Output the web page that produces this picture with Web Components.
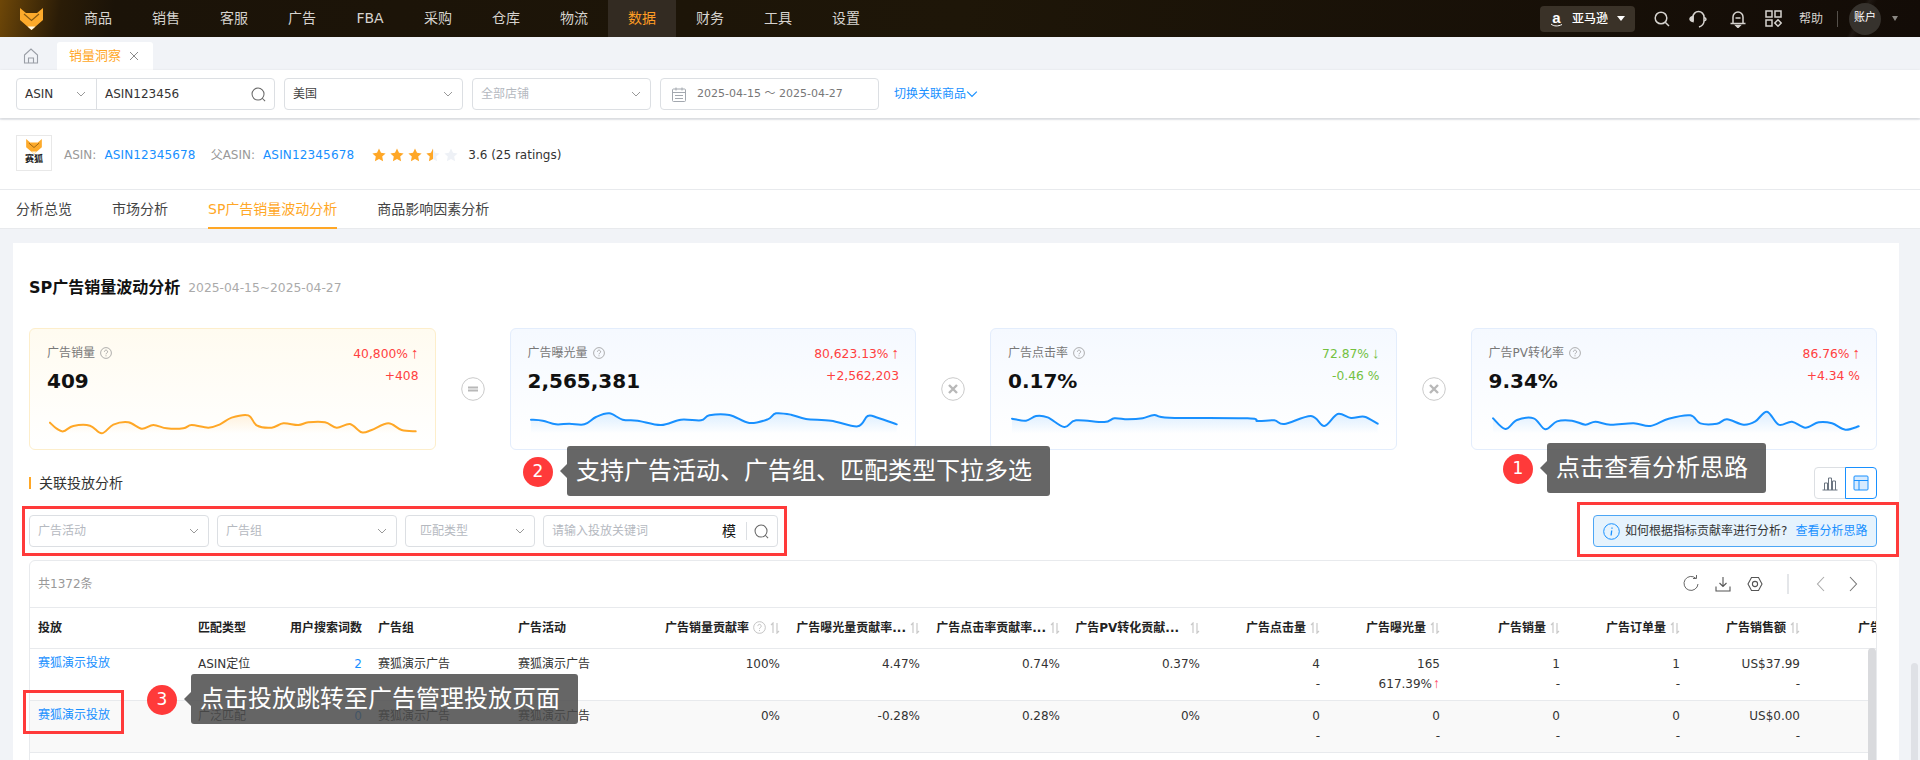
<!DOCTYPE html>
<html lang="zh">
<head>
<meta charset="utf-8">
<title>销量洞察</title>
<style>
  html, body { margin: 0; height: 760px; overflow: hidden; background: #f1f3f7; }
  body { font: 12px/1.5 "DejaVu Sans", "Noto Sans CJK SC", sans-serif; color: #333; }
  sx-app { display: block; position: relative; height: 760px; overflow: hidden; }
</style>
</head>
<body>
<sx-app>
  <sx-topbar></sx-topbar>
  <sx-tabstrip></sx-tabstrip>
  <sx-filterbar></sx-filterbar>
  <sx-product></sx-product>
  <sx-subtabs></sx-subtabs>
  <sx-panel>
    <sx-metric slot="metrics" label="广告销量" value="409" pct="40,800%" dir="up" delta="+408" tone="warm"
      points="150,308 170,326 190,334 220,318 270,317 305,340 340,314 385,307 425,326 460,315 500,325 550,325 575,315 625,323 660,313 695,293 745,286 770,316 815,323 850,310 895,315 925,307 975,307 1010,323 1050,312 1085,337 1115,330 1165,310 1205,330 1247,334"></sx-metric>
    <sx-operator slot="metrics" kind="eq"></sx-operator>
    <sx-metric slot="metrics" label="广告曝光量" value="2,565,381" pct="80,623.13%" dir="up" delta="+2,562,203"
      points="150,299 185,302 225,313 265,311 310,313 345,291 385,280 425,299 470,302 540,315 600,299 660,301 685,286 745,285 805,309 860,298 885,280 930,284 975,297 1050,302 1130,319 1160,288 1190,293 1247,313"></sx-metric>
    <sx-operator slot="metrics" kind="x"></sx-operator>
    <sx-metric slot="metrics" label="广告点击率" value="0.17%" pct="72.87%" dir="down" delta="-0.46 %"
      points="153,296 195,302 225,288 260,292 310,321 345,301 430,306 460,295 500,298 545,295 580,285 625,293 860,295 890,303 940,301 970,312 1050,288 1090,318 1130,282 1170,294 1210,290 1250,311"></sx-metric>
    <sx-operator slot="metrics" kind="x"></sx-operator>
    <sx-metric slot="metrics" label="广告PV转化率" value="9.34%" pct="86.76%" dir="up" delta="+4.34 %"
      points="153,295 190,327 225,300 275,295 310,328 345,304 390,302 430,314 460,305 505,314 575,310 625,318 680,296 745,286 775,310 825,311 855,298 905,314 940,304 975,275 1010,314 1050,305 1090,323 1130,307 1170,310 1210,329 1250,319"></sx-metric>
    <sx-data-table slot="table"></sx-data-table>
  </sx-panel>

  <!-- guide overlays lie over the page -->
  <sx-redbox style="left:22px;top:506px;width:765px;height:50px"></sx-redbox>
  <sx-redbox style="left:1577px;top:502px;width:322px;height:55px"></sx-redbox>
  <sx-redbox style="left:23px;top:690px;width:101px;height:44px"></sx-redbox>
  <sx-callout n="1" style="left:1503px;top:443px">点击查看分析思路</sx-callout>
  <sx-callout n="2" style="left:523px;top:446px">支持广告活动、广告组、匹配类型下拉多选</sx-callout>
  <sx-callout n="3" style="left:147px;top:674px">点击投放跳转至广告管理投放页面</sx-callout>
  <sx-page-scroll></sx-page-scroll>
</sx-app>

<script>
const chevron = (c = "#999", s = 10) =>
  `<svg width="${s}" height="${s}" viewBox="0 0 10 10" fill="none" stroke="${c}" stroke-width="1"><path d="M1 3l4 4 4-4"/></svg>`;
const lens = (c = "#666", s = 15) =>
  `<svg width="${s}" height="${s}" viewBox="0 0 16 16" fill="none" stroke="${c}" stroke-width="1.1"><circle cx="7.5" cy="7.5" r="6.4"/><path d="M12 12l3 3"/></svg>`;
const fox = (w, h) =>
  `<svg width="${w}" height="${h}" viewBox="0 0 23 22"><path d="M0 0l6 5h11l6-5v12L11.500 22 0 12z" fill="#fdaa2b"/><path d="M4 6l7.500 6.500L19 6" fill="none" stroke="#8a5a10" stroke-width="1.200"/><path d="M7.500 18.500h8L11.500 22z" fill="#fff6e0"/></svg>`;
const helpDot = (c = "#999") =>
  `<svg width="12" height="12" viewBox="0 0 12 12" fill="none" stroke="${c}" stroke-width=".8"><circle cx="6" cy="6" r="5.400"/><path d="M4.400 4.700a1.600 1.600 0 1 1 2.400 1.400c-.6.3-.8.600-.8 1.200M6 8.300v1"/></svg>`;
const sortIcon =
  `<svg width="10" height="12" viewBox="0 0 10 12" fill="none" stroke="#c9c9c9" stroke-width="1.2"><path d="M3 11V1L1 3M7 1v10l2-2"/></svg>`;

class SxTopbar extends HTMLElement {
  constructor() {
    super();
    this.attachShadow({ mode: "open" });
  }
  connectedCallback() {
    const items = ["商品", "销售", "客服", "广告", "FBA", "采购", "仓库", "物流", "数据", "财务", "工具", "设置"];
    this.shadowRoot.innerHTML = `
      <style>
        :host {
          display: flex;
          height: 37px;
          align-items: center;
          color: #d6d3cf;
          font-size: 14px;
          background:
            linear-gradient(118deg, transparent 96.2%, rgba(255,255,255,.05) 96.4%, transparent 96.800%),
            linear-gradient(100deg, #6e4708 0, #2a1c07 3.2%, #1b1308 6%, #1e1608 50%, #130c07 100%);
        }
        .logo { width: 23px; height: 22px; margin: 0 21px 0 20px; display: flex; }
        nav { display: flex; height: 37px; }
        nav a { width: 68px; display: flex; align-items: center; justify-content: center; }
        nav a.on { background: #332b22; color: #ff9d24; }
        .right { margin-left: auto; display: flex; align-items: center; height: 37px; }
        .pill {
          width: 95px; height: 26px; box-sizing: border-box; padding-left: 10px;
          display: flex; align-items: center; background: #3a3228; border-radius: 4px;
          color: #fff; font-size: 12px; font-weight: 500;
        }
        .amz { width: 13px; height: 18px; margin-right: 9px; position: relative; font: bold 15px/15px "Liberation Sans", sans-serif; text-align: center; }
        .amz svg { position: absolute; left: 0; bottom: 0; }
        .caret { width: 0; height: 0; border: 4px solid transparent; border-top: 5px solid #fff; border-bottom: 0; margin-left: 9px; }
        .ico { display: flex; }
        .help { font-size: 12px; margin-left: 17px; }
        .sep { width: 1px; height: 16px; background: #55504a; margin: 0 11px 0 14px; }
        .avatar {
          width: 32px; height: 32px; border-radius: 50%; background: #36322d; color: #fff;
          display: flex; align-items: center; justify-content: center; font-size: 11px;
        }
        .caret2 { width: 0; height: 0; border: 3.500px solid transparent; border-top: 5px solid #8a8782; border-bottom: 0; margin: 0 22px 0 11px; }
      </style>
      <div class="logo">${fox(23, 22)}</div>
      <nav>${items.map((t) => `<a class="${t === "数据" ? "on" : ""}">${t}</a>`).join("")}</nav>
      <div class="right">
        <div class="pill">
          <span class="amz">a<svg width="13" height="5" viewBox="0 0 13 5" fill="none" stroke="#fff" stroke-width="1"><path d="M1 1c3 2.500 7 2.500 11 .5"/></svg></span>
          亚马逊<span class="caret"></span>
        </div>
        <span class="ico" style="margin-left:19px"><svg width="16" height="16" viewBox="0 0 16 16" fill="none" stroke="#d6d3cf" stroke-width="1.500"><circle cx="7" cy="7" r="5.800"/><path d="M11.200 11.200L15 15"/></svg></span>
        <span class="ico" style="margin-left:19px"><svg width="18" height="18" viewBox="0 0 18 18" fill="none" stroke="#d6d3cf" stroke-width="1.500"><path d="M4 11V7a5.500 5.500 0 0 1 11 0v4c0 3-2 5-5 6"/><path d="M4 6.500C2 7 1 8 1 9s1 2 3 2.500z" fill="#d6d3cf"/><path d="M15 7.500c1.500.4 2 1 2 1.700s-.5 1.300-2 1.700"/></svg></span>
        <span class="ico" style="margin-left:22px"><svg width="18" height="18" viewBox="0 0 18 18" fill="none" stroke="#d6d3cf" stroke-width="1.500"><path d="M4 13V7a5 5 0 0 1 10 0v6"/><path d="M1.500 13.500h15M6.500 8h5"/><path d="M7 15.500h4L9 17.500z" fill="#d6d3cf"/></svg></span>
        <span class="ico" style="margin-left:18px"><svg width="17" height="17" viewBox="0 0 17 17" fill="none" stroke="#d6d3cf" stroke-width="1.500"><rect x="1" y="1" width="6" height="6"/><rect x="10" y="1" width="6" height="6"/><rect x="1" y="10" width="6" height="6"/><path d="M13 9.800l3.200 3.200-3.200 3.200-3.200-3.200z"/></svg></span>
        <span class="help">帮助</span>
        <span class="sep"></span>
        <span class="avatar">账户</span>
        <span class="caret2"></span>
      </div>`;
  }
}

class SxTabstrip extends HTMLElement {
  constructor() {
    super();
    this.attachShadow({ mode: "open" });
    this.shadowRoot.innerHTML = `
      <style>
        :host { display: flex; height: 33px; align-items: flex-end; background: #f1f3f7; box-sizing: border-box; }
        .home { width: 16px; height: 16px; margin: 0 18px 6px 23px; }
        .tab {
          width: 96px; height: 28px; box-sizing: border-box; padding-left: 12px;
          display: flex; align-items: center; gap: 8px; background: #fff;
          border-radius: 3px 3px 0 0; color: #ffa726; font-size: 13px;
        }
      </style>
      <svg class="home" viewBox="0 0 16 16" fill="none" stroke="#9a9ea6" stroke-width="1.100"><path d="M1.500 7L8 1l6.500 6v8h-13z"/><path d="M5.500 15v-5h5v5"/></svg>
      <div class="tab">销量洞察<svg width="10" height="10" viewBox="0 0 10 10" stroke="#8b8b8b" stroke-width="1"><path d="M1 1l8 8M9 1l-8 8"/></svg></div>`;
  }
}

class SxField extends HTMLElement {
  constructor() {
    super();
    this.attachShadow({ mode: "open" });
  }
  connectedCallback() {
    const muted = this.hasAttribute("muted");
    this.shadowRoot.innerHTML = `
      <style>
        :host {
          display: flex; box-sizing: border-box; height: 32px; align-items: center;
          border: 1px solid #dcdfe3; border-radius: 4px; background: #fff;
          padding: 0 9px 0 var(--pad, 8px); font-size: 12px;
          color: ${muted ? "#b5b9bf" : "#444"};
        }
        span { flex: 1; white-space: nowrap; }
        svg { flex: none; }
      </style>
      <span>${this.getAttribute("label") || ""}</span>${chevron("#999")}`;
  }
}

class SxFilterbar extends HTMLElement {
  constructor() {
    super();
    this.attachShadow({ mode: "open" });
    this.shadowRoot.innerHTML = `
      <style>
        :host {
          display: flex; height: 48px; box-sizing: border-box; padding: 8px 0 0 16px;
          gap: 9px; background: #fff; box-shadow: 0 1px 3px rgba(0,0,0,.14);
          position: relative; font-size: 12px;
        }
        .combo { display: flex; width: 259px; height: 32px; box-sizing: border-box; border: 1px solid #dcdfe3; border-radius: 4px; }
        .type { width: 80px; box-sizing: border-box; display: flex; align-items: center; justify-content: space-between; padding: 0 10px 0 8px; border-right: 1px solid #dcdfe3; }
        .kw { flex: 1; display: flex; align-items: center; justify-content: space-between; padding: 0 8px; }
        .date {
          width: 219px; height: 32px; box-sizing: border-box; border: 1px solid #dcdfe3; border-radius: 4px;
          display: flex; align-items: center; gap: 11px; padding-left: 11px; color: #777; font-size: 11px;
        }
        .swap { color: #1890ff; display: flex; align-items: center; height: 32px; margin-left: 6px; }
        sx-field { width: 179px; }
      </style>
      <div class="combo">
        <div class="type">ASIN${chevron("#999")}</div>
        <div class="kw">ASIN123456${lens("#666")}</div>
      </div>
      <sx-field label="美国"></sx-field>
      <sx-field label="全部店铺" muted></sx-field>
      <div class="date">
        <svg width="14" height="15" viewBox="0 0 14 15" fill="none" stroke="#a3a8af" stroke-width="1"><rect x=".5" y="2" width="13" height="12.500" rx="1"/><path d="M.5 5.500h13M4 .5v3M10 .5v3M3 8.500h8M3 11.500h8"/></svg>
        <span>2025-04-15 ～ 2025-04-27</span>
      </div>
      <div class="swap">切换关联商品${chevron("#1890ff", 12)}</div>`;
  }
}

class SxProduct extends HTMLElement {
  constructor() {
    super();
    this.attachShadow({ mode: "open" });
    const star = (fill, half) => `<svg width="14" height="14" viewBox="0 0 14 14"><path d="M7 .5l2 4.300 4.600.6-3.400 3.200.9 4.700L7 11l-4.100 2.300.9-4.700L.4 5.400 5 4.800z" fill="${half ? "#eef1f6" : fill}"/>${half ? `<path d="M7 .5v10.500l-4.100 2.300.9-4.700L.4 5.400 5 4.800z" fill="${fill}"/>` : ""}</svg>`;
    this.shadowRoot.innerHTML = `
      <style>
        :host {
          display: flex; height: 70px; margin-top: 2px; box-sizing: border-box; align-items: center;
          padding: 0 0 3px 16px; background: #fff; border-bottom: 1px solid #e8eaed; font-size: 12px; color: #999;
        }
        .logo {
          width: 36px; height: 36px; box-sizing: border-box; border: 1px solid #e8e8e8; margin-right: 12px;
          display: flex; flex-direction: column; align-items: center; padding-top: 3px;
          color: #222; font-size: 9px; font-weight: 700; line-height: 11px;
        }
        .info { display: flex; align-items: center; padding-top: 4px; }
        a { color: #1890ff; letter-spacing: .15px; }
        .asin { margin-left: 8px; }
        .par { margin-left: 15px; }
        .stars { display: flex; gap: 4px; margin: 0 10px 0 18px; }
        .rate { color: #333; }
      </style>
      <div class="logo">${fox(16, 15)}赛狐</div>
      <div class="info">
        <span>ASIN:</span><a class="asin">ASIN12345678</a>
        <span class="par">父ASIN:</span><a class="asin">ASIN12345678</a>
        <div class="stars">${star("#ffa726")}${star("#ffa726")}${star("#ffa726")}${star("#ffa726", true)}${star("#eef1f6")}</div>
        <span class="rate">3.6 (25 ratings)</span>
      </div>`;
  }
}

class SxSubtabs extends HTMLElement {
  constructor() {
    super();
    this.attachShadow({ mode: "open" });
    const tabs = ["分析总览", "市场分析", "SP广告销量波动分析", "商品影响因素分析"];
    this.shadowRoot.innerHTML = `
      <style>
        :host {
          display: flex; height: 39px; gap: 40px; padding-left: 16px; background: #fff;
          font-size: 14px; color: #444; box-sizing: border-box; border-bottom: 1px solid #e8eaed;
        }
        a { display: flex; align-items: center; height: 39px; box-sizing: border-box; }
        a.on { color: #ffa726; border-bottom: 2px solid #ffa726; padding-top: 2px; }
      </style>
      ${tabs.map((t, i) => `<a class="${i === 2 ? "on" : ""}">${t}</a>`).join("")}`;
  }
}

class SxSpark extends HTMLElement {
  constructor() {
    super();
    this.attachShadow({ mode: "open" });
  }
  connectedCallback() {
    const color = this.getAttribute("color") || "#1890ff";
    const p = this.getAttribute("points").trim().split(/\s+/).map((s) => s.split(",").map(Number));
    // catmull-rom through the sampled points
    let d = `M${p[0][0]} ${p[0][1]}`;
    for (let i = 0; i < p.length - 1; i++) {
      const a = p[Math.max(i - 1, 0)], b = p[i], c = p[i + 1], e = p[Math.min(i + 2, p.length - 1)];
      const c1 = [b[0] + (c[0] - a[0]) / 6, b[1] + (c[1] - a[1]) / 6];
      const c2 = [c[0] - (e[0] - b[0]) / 6, c[1] - (e[1] - b[1]) / 6];
      d += ` C${c1[0].toFixed(1)} ${c1[1].toFixed(1)} ${c2[0].toFixed(1)} ${c2[1].toFixed(1)} ${c[0]} ${c[1]}`;
    }
    const id = "g" + Math.random().toString(36).slice(2, 8);
    this.shadowRoot.innerHTML = `
      <style>:host { display: block; width: 368px; height: 27px; } svg { display: block; overflow: visible; }</style>
      <svg width="368" height="27" viewBox="150 270 1104 81">
        <defs><linearGradient id="${id}" x1="0" y1="0" x2="0" y2="1">
          <stop offset="0" stop-color="${color}" stop-opacity=".14"/><stop offset="1" stop-color="${color}" stop-opacity="0"/>
        </linearGradient></defs>
        <path d="${d} V340 H${p[0][0]} Z" fill="url(#${id})"/>
        <path d="${d}" fill="none" stroke="${color}" stroke-width="6" stroke-linecap="round"/>
      </svg>`;
  }
}

class SxMetric extends HTMLElement {
  constructor() {
    super();
    this.attachShadow({ mode: "open" });
  }
  connectedCallback() {
    const warm = this.getAttribute("tone") === "warm";
    const up = this.getAttribute("dir") === "up";
    const tone = up ? "#ff4040" : "#73c13f";
    this.shadowRoot.innerHTML = `
      <style>
        :host {
          display: block; box-sizing: border-box; width: 406.500px; height: 122px; flex: none;
          padding: 15px 16px 0 17px; border-radius: 6px;
          border: 1px solid ${warm ? "#fdeecb" : "#e3edfc"};
          background: linear-gradient(180deg, ${warm ? "#fffbf0" : "#f5f9ff"} 0, #fff 100%);
        }
        .top { display: flex; justify-content: space-between; height: 18px; line-height: 18px; }
        .label { display: flex; align-items: center; gap: 5px; color: #777; font-size: 12px; }
        .pct, .delta { font: 12.300px/18px "DejaVu Sans", sans-serif; color: ${tone}; }
        .pct i { font: 15px/18px "Liberation Sans", sans-serif; margin-left: 3px; }
        .mid { display: flex; justify-content: space-between; height: 28px; margin-top: 5px; }
        .value { font: bold 20px/28px "DejaVu Sans", sans-serif; color: #111; }
        sx-spark { margin: 15px 0 0 3px; }
      </style>
      <div class="top">
        <span class="label">${this.getAttribute("label")} ${helpDot("#999")}</span>
        <span class="pct">${this.getAttribute("pct")}<i>${up ? "↑" : "↓"}</i></span>
      </div>
      <div class="mid">
        <span class="value">${this.getAttribute("value")}</span>
        <span class="delta">${this.getAttribute("delta")}</span>
      </div>
      <sx-spark color="${warm ? "#ffa726" : "#1890ff"}" points="${this.getAttribute("points")}"></sx-spark>`;
  }
}

class SxOperator extends HTMLElement {
  constructor() {
    super();
    this.attachShadow({ mode: "open" });
  }
  connectedCallback() {
    const glyph = this.getAttribute("kind") === "eq"
      ? `<path d="M7 10.500h10M7 13.500h10" stroke="#b8b8b8" stroke-width="2"/>`
      : `<path d="M8 8l8 8M16 8l-8 8" stroke="#b8b8b8" stroke-width="2.400"/>`;
    this.shadowRoot.innerHTML = `
      <style>:host { display: flex; flex: 1; align-items: center; justify-content: center; }</style>
      <svg width="24" height="24" viewBox="0 0 24 24" fill="none"><circle cx="12" cy="12" r="11.300" stroke="#c4c4c4" stroke-width=".9"/>${glyph}</svg>`;
  }
}

class SxPanel extends HTMLElement {
  constructor() {
    super();
    this.attachShadow({ mode: "open" });
    const box = (w) => `style="width:${w}px"`;
    this.shadowRoot.innerHTML = `
      <style>
        :host {
          display: block; margin: 14px 21px 0 13px; padding: 33px 22px 0 16px; background: #fff; height: 600px;
        }
        h2 { margin: 0; height: 24px; display: flex; align-items: center; gap: 8px; font-size: 16px; font-weight: 700; color: #111; }
        h2 small { font-size: 12.300px; font-weight: 400; color: #aaa; }
        .metrics { display: flex; margin-top: 28px; }
        .head { display: flex; justify-content: space-between; align-items: center; height: 32px; margin-top: 17px; }
        h3 { margin: 0; font-size: 14px; font-weight: 400; color: #333; border-left: 2px solid #ffa726; padding-left: 8px; line-height: 12px; height: 12px; display: flex; align-items: center; }
        .toggle { display: flex; }
        .toggle span { width: 32px; height: 32px; box-sizing: border-box; display: flex; align-items: center; justify-content: center; border: 1px solid #dcdfe3; border-radius: 4px 0 0 4px; }
        .toggle .on { border: 1px solid #1890ff; border-radius: 0 4px 4px 0; margin-left: -1px; }
        .row { display: flex; justify-content: space-between; margin-top: 16px; }
        .filters { display: flex; gap: 8px; }
        .search {
          width: 235px; height: 32px; box-sizing: border-box; border: 1px solid #dcdfe3; border-radius: 4px;
          display: flex; align-items: center; padding: 0 8px 0 8px; color: #b5b9bf; font-size: 12px;
        }
        .search b { margin-left: auto; color: #111; font-weight: 400; font-size: 14px; }
        .search i { width: 1px; height: 18px; background: #dcdfe3; margin: 0 7px 0 10px; }
        .alert {
          width: 284px; height: 32px; box-sizing: border-box; display: flex; align-items: center;
          background: #e6f3fd; border: 1px solid #4da6f5; border-radius: 4px; padding-left: 9px;
          font-size: 12px; color: #333; white-space: nowrap;
        }
        .alert svg { margin-right: 5px; flex: none; }
        .alert a { color: #1890ff; margin-left: 8px; }
        ::slotted([slot="table"]) { margin-top: 13px; }
      </style>
      <h2>SP广告销量波动分析 <small>2025-04-15~2025-04-27</small></h2>
      <div class="metrics"><slot name="metrics"></slot></div>
      <div class="head">
        <h3>关联投放分析</h3>
        <div class="toggle">
          <span><svg width="16" height="16" viewBox="0 0 16 16" fill="none" stroke="#6b7480" stroke-width="1"><path d="M.5 15h15M2.500 15V8h3v7M6.500 15V3h3v12M10.500 15V6h3v9"/></svg></span>
          <span class="on"><svg width="16" height="16" viewBox="0 0 16 16" fill="#d7ebff" stroke="#1890ff" stroke-width="1"><rect x="1" y="1" width="14" height="14" rx="1"/><path d="M1 5.500h14M6 5.500V15" fill="none"/></svg></span>
        </div>
      </div>
      <div class="row">
        <div class="filters">
          <sx-field muted label="广告活动" ${box(180)}></sx-field>
          <sx-field muted label="广告组" ${box(180)}></sx-field>
          <sx-field muted label="匹配类型" style="width:130px;--pad:14px"></sx-field>
          <div class="search">请输入投放关键词<b>模</b><i></i>${lens("#666", 15)}</div>
        </div>
        <div class="alert">
          <svg width="17" height="17" viewBox="0 0 17 17" fill="none" stroke="#1890ff" stroke-width="1"><circle cx="8.500" cy="8.500" r="7.800"/><path d="M9 4.500v1.300M8.700 7.500l-.6 5" stroke-width="1.300"/></svg>
          如何根据指标贡献率进行分析?<a>查看分析思路</a>
        </div>
      </div>
      <slot name="table"></slot>`;
  }
}

class SxDataTable extends HTMLElement {
  constructor() {
    super();
    this.attachShadow({ mode: "open" });
  }
  connectedCallback() {
    const widths = [160, 91, 89, 140, 140, 138, 140, 140, 140, 120, 120, 120, 120, 120, 120];
    const heads = [
      ["投放"], ["匹配类型"], ["用户搜索词数", "r"], ["广告组"], ["广告活动"],
      ["广告销量贡献率", "rqs"], ["广告曝光量贡献率...", "rs"], ["广告点击率贡献率...", "rs"], ["广告PV转化贡献...", "rsg"],
      ["广告点击量", "rs"], ["广告曝光量", "rs"], ["广告销量", "rs"], ["广告订单量", "rs"], ["广告销售额", "rs"], ["广告花费", "rs"],
    ];
    const up = `<span class="up">↑</span>`;
    const rows = [
      ["赛狐演示投放", "ASIN定位", "2", "赛狐演示广告", "赛狐演示广告", "100%", "4.47%", "0.74%", "0.37%", "4|-", `165|617.39%${up}`, "1|-", "1|-", "US$37.99|-", "US$1.20|-"],
      ["赛狐演示投放", "广泛匹配", "0", "赛狐演示广告", "赛狐演示广告", "0%", "-0.28%", "0.28%", "0%", "0|-", "0|-", "0|-", "0|-", "US$0.00|-", "US$0.00|-"],
    ];
    const headCells = heads.map(([t, f = ""]) => `
      <th class="${f.includes("r") ? "r" : ""}"><div>${t}${f.includes("q") ? `<span class="q">${helpDot("#bbb").replace(/width="12" height="12"/, 'width="13" height="13"')}</span>` : ""}${f.includes("s") ? `<span class="s${f.includes("g") ? " g" : ""}">${sortIcon}</span>` : ""}</div></th>`).join("");
    const bodyRows = rows.map((r) => `<tr>${r.map((v, i) => {
      const right = i === 2 || i > 4;
      const [a, b] = v.split("|");
      let inner = a;
      if (i === 0) inner = `<a class="lk">${a}</a>`;
      if (i === 2) inner = `<a>${a}</a>`;
      return `<td class="${right ? "r" : ""}"><div>${inner}</div>${b ? `<div>${b}</div>` : ""}</td>`;
    }).join("")}</tr>`).join("");
    this.shadowRoot.innerHTML = `
      <style>
        :host {
          display: block; position: relative; height: 260px; overflow: hidden; box-sizing: border-box;
          border: 1px solid #e8eaed; border-radius: 6px 6px 0 0; font-size: 12px; background: #fff;
        }
        .tools { height: 47px; display: flex; align-items: center; padding: 0 18px 0 8px; border-bottom: 1px solid #e8eaed; color: #999; box-sizing: border-box; }
        .tools .right { margin-left: auto; display: flex; align-items: center; }
        .tools svg { display: block; }
        table { table-layout: fixed; border-collapse: collapse; width: 1898px; }
        th { height: 40px; padding: 0 8px; font-weight: 700; color: #222; text-align: left; border-bottom: 1px solid #e8eaed; white-space: nowrap; box-sizing: border-box; }
        th div { display: flex; align-items: center; }
        th.r div { justify-content: flex-end; }
        .q { margin-left: 4px; display: flex; }
        .s { margin-left: 4px; display: flex; }
        .s.g { margin-left: 11px; }
        td { height: 52px; padding: 5px 8px 0; box-sizing: border-box; vertical-align: top; color: #333; line-height: 20.500px; border-bottom: 1px solid #e8eaed; white-space: nowrap; }
        td.r { text-align: right; }
        tr:nth-child(2) td { background: #f9f9f9; }
        td a { color: #1890ff; }
        td a.lk { display: block; margin-top: -1px; }
        .up { color: #ff4d6a; font: bold 14px/1 "Liberation Sans", sans-serif; margin-left: 1px; }
        .bar { position: absolute; right: 0; top: 87px; width: 8px; bottom: 0; background: #d9dadd; border-radius: 4px 4px 0 0; }
      </style>
      <div class="tools">
        共1372条
        <div class="right">
          <svg width="16" height="18" viewBox="0 0 16 18" fill="none" stroke="#666" stroke-width="1"><path d="M13 3.500A7 7 0 1 0 15 9"/><path d="M10 3.500h3.500V0"/></svg>
          <svg style="margin-left:16px" width="16" height="16" viewBox="0 0 16 16" fill="none" stroke="#555" stroke-width="1.100"><path d="M8 1v9M4.500 7L8 10.500 11.500 7M1 10.500V15h14v-4.500"/></svg>
          <svg style="margin-left:16px" width="16" height="16" viewBox="0 0 16 16" fill="none" stroke="#555" stroke-width="1.100"><path d="M4.500 1.500h7L15 8l-3.500 6.500h-7L1 8z"/><circle cx="8" cy="8" r="2.600"/></svg>
          <span style="width:2px;height:20px;background:#e4e6e9;margin:0 27px 0 24px"></span>
          <svg width="10" height="16" viewBox="0 0 10 16" fill="none" stroke="#aaa" stroke-width="1.100"><path d="M8 1L1.500 8 8 15"/></svg>
          <svg style="margin-left:22px" width="10" height="16" viewBox="0 0 10 16" fill="none" stroke="#777" stroke-width="1.100"><path d="M2 1l6.500 7L2 15"/></svg>
        </div>
      </div>
      <table>
        <colgroup>${widths.map((w) => `<col style="width:${w}px">`).join("")}</colgroup>
        <thead><tr>${headCells}</tr></thead>
        <tbody>${bodyRows}</tbody>
      </table>
      <div class="bar"></div>`;
  }
}

class SxCallout extends HTMLElement {
  constructor() {
    super();
    this.attachShadow({ mode: "open" });
  }
  connectedCallback() {
    this.shadowRoot.innerHTML = `
      <style>
        :host { position: absolute; display: flex; align-items: center; height: 50px; }
        .n {
          width: 30px; height: 30px; border-radius: 50%; background: #ff3a3a; color: #fff;
          font-size: 17px; display: flex; align-items: center; justify-content: center; margin-right: 14px; margin-top: 2px;
        }
        .box {
          position: relative; height: 50px; box-sizing: border-box; display: flex; align-items: center;
          padding: 0 18px 0 9px; background: rgba(75,75,75,.85); border-radius: 3px;
          color: #fff; font-size: 24px; white-space: nowrap;
        }
        .box::before {
          content: ""; position: absolute; left: -7px; top: 18px; width: 0; height: 0;
          border: 7px solid transparent; border-right-color: rgba(75,75,75,.85); border-left: 0;
        }
      </style>
      <span class="n">${this.getAttribute("n")}</span>
      <div class="box"><slot></slot></div>`;
  }
}

class SxRedbox extends HTMLElement {
  constructor() {
    super();
    this.attachShadow({ mode: "open" });
    this.shadowRoot.innerHTML = `<style>:host { position: absolute; box-sizing: border-box; border: 3px solid #ff3a3a; }</style>`;
  }
}

class SxPageScroll extends HTMLElement {
  constructor() {
    super();
    this.attachShadow({ mode: "open" });
    this.shadowRoot.innerHTML = `<style>:host { position: absolute; left: 1911px; top: 663px; width: 7px; height: 97px; background: #dfe1e6; border-radius: 4px 4px 0 0; }</style>`;
  }
}

customElements.define("sx-spark", SxSpark);
customElements.define("sx-field", SxField);
customElements.define("sx-topbar", SxTopbar);
customElements.define("sx-tabstrip", SxTabstrip);
customElements.define("sx-filterbar", SxFilterbar);
customElements.define("sx-product", SxProduct);
customElements.define("sx-subtabs", SxSubtabs);
customElements.define("sx-metric", SxMetric);
customElements.define("sx-operator", SxOperator);
customElements.define("sx-panel", SxPanel);
customElements.define("sx-data-table", SxDataTable);
customElements.define("sx-callout", SxCallout);
customElements.define("sx-redbox", SxRedbox);
customElements.define("sx-page-scroll", SxPageScroll);
</script>
</body>
</html>
